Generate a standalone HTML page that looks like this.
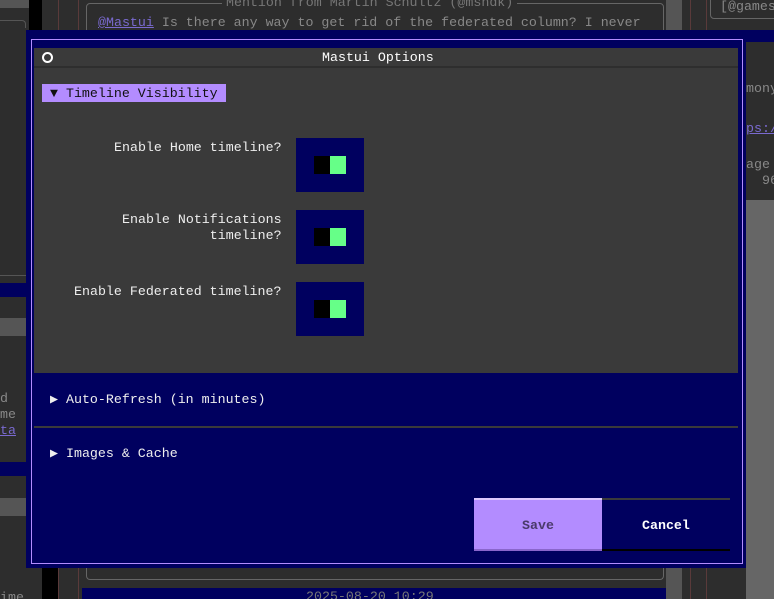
<!DOCTYPE html>
<html><head><meta charset="utf-8"><style>
*{margin:0;padding:0;box-sizing:border-box}
html,body{width:774px;height:599px;overflow:hidden}
body{background:#2d2d2d;font-family:"Liberation Mono","DejaVu Sans Mono",monospace;font-size:13.3px;position:relative}
.a{position:absolute}
.t{position:absolute;white-space:pre;line-height:16px}
</style></head><body>
<!-- background app -->
<div class="a" style="left:0;top:0;width:42px;height:8px;background:#555"></div>
<div class="a" style="left:29px;top:0;width:13px;height:30px;background:#000"></div>
<div class="a" style="left:-10px;top:20px;width:36px;height:8px;border-top:1px solid #555;border-right:1px solid #555;border-radius:0 4px 0 0"></div>
<div class="a" style="left:0;top:275px;width:26px;height:1px;background:#555"></div>
<div class="a" style="left:58px;top:0;width:1px;height:599px;background:#5a3a3a"></div>
<div class="a" style="left:78px;top:0;width:1px;height:599px;background:#5a3a3a"></div>
<div class="a" style="left:86px;top:3px;width:578px;height:60px;border:1px solid #666;border-radius:4px"></div>
<div class="t" style="left:222px;top:-5px;color:#777;background:#2d2d2d;padding:0 4px">Mention from Martin Schultz (@mshdk)</div>
<div class="t" style="left:98px;top:15px;color:#888"><span style="color:#7a6ad0;text-decoration:underline">@Mastui</span> Is there any way to get rid of the federated column? I never</div>
<div class="a" style="left:666px;top:0;width:16px;height:599px;background:#555"></div>
<div class="a" style="left:690px;top:0;width:1px;height:599px;background:#5a3a3a"></div>
<div class="a" style="left:706px;top:0;width:1px;height:599px;background:#5a3a3a"></div>
<div class="a" style="left:710px;top:-5px;width:80px;height:24px;border:1px solid #666;border-radius:4px"></div>
<div class="t" style="left:720px;top:-1px;color:#888">[@games</div>
<div class="a" style="left:746px;top:30px;width:28px;height:170px;background:#2d2d2d"></div>
<div class="a" style="left:746px;top:30px;width:28px;height:12px;background:#00005f"></div>
<div class="t" style="left:746px;top:81px;color:#888">mony</div>
<div class="t" style="left:746px;top:121px;color:#7a6ad0;text-decoration:underline">ps:/</div>
<div class="t" style="left:746px;top:157px;color:#888">age
  96%</div>
<div class="a" style="left:746px;top:200px;width:28px;height:399px;background:#666"></div>
<div class="a" style="left:0;top:283px;width:26px;height:14px;background:#00005f"></div>
<div class="a" style="left:0;top:318px;width:26px;height:18px;background:#555"></div>
<div class="t" style="left:0;top:391px;color:#888">d
me
<span style="color:#7a6ad0;text-decoration:underline">ta</span></div>
<div class="a" style="left:0;top:462px;width:26px;height:14px;background:#00005f"></div>
<div class="a" style="left:0;top:498px;width:26px;height:18px;background:#555"></div>
<div class="t" style="left:0;top:590px;color:#888">ime</div>
<div class="a" style="left:42px;top:568px;width:16px;height:31px;background:#000"></div>
<div class="a" style="left:86px;top:560px;width:578px;height:20px;border:1px solid #666;border-top:none;border-radius:0 0 4px 4px"></div>
<div class="a" style="left:82px;top:588px;width:584px;height:11px;background:#00005f"></div>
<div class="t" style="left:306px;top:589px;color:#777">2025-08-20 10:29</div>

<!-- dialog -->
<div class="a" style="left:26px;top:30px;width:720px;height:538px;background:#00005f"></div>
<div class="a" style="left:31px;top:39px;width:712px;height:525px;border:1px solid #b38cff"></div>
<div class="a" style="left:34px;top:48px;width:704px;height:325px;background:#3a3a3a"></div>
<div class="a" style="left:34px;top:66px;width:704px;height:2px;background:#2e2e2e"></div>
<div class="a" style="left:42px;top:52px;width:11px;height:11px;border:2px solid #fff;border-radius:50%"></div>
<div class="t" style="left:322px;top:50px;color:#fff">Mastui Options</div>
<div class="a" style="left:42px;top:84px;width:184px;height:18px;background:#b38cff"></div>
<div class="t" style="left:50px;top:86px;color:#111">▼ Timeline Visibility</div>

<div class="t" style="left:114px;top:140px;color:#eee">Enable Home timeline?</div>
<div class="t" style="left:122px;top:212px;color:#eee;text-align:right">Enable Notifications
timeline?</div>
<div class="t" style="left:74px;top:284px;color:#eee">Enable Federated timeline?</div>

<div class="a" style="left:296px;top:138px;width:68px;height:54px;background:#00005f"><div class="a" style="left:18px;top:18px;width:16px;height:18px;background:#000"></div><div class="a" style="left:34px;top:18px;width:16px;height:18px;background:#66ff88"></div></div>
<div class="a" style="left:296px;top:210px;width:68px;height:54px;background:#00005f"><div class="a" style="left:18px;top:18px;width:16px;height:18px;background:#000"></div><div class="a" style="left:34px;top:18px;width:16px;height:18px;background:#66ff88"></div></div>
<div class="a" style="left:296px;top:282px;width:68px;height:54px;background:#00005f"><div class="a" style="left:18px;top:18px;width:16px;height:18px;background:#000"></div><div class="a" style="left:34px;top:18px;width:16px;height:18px;background:#66ff88"></div></div>

<div class="t" style="left:50px;top:392px;color:#eee">▶ Auto-Refresh (in minutes)</div>
<div class="a" style="left:34px;top:426px;width:704px;height:2px;background:#3a3a3a"></div>
<div class="t" style="left:50px;top:446px;color:#eee">▶ Images &amp; Cache</div>

<div class="a" style="left:474px;top:498px;width:128px;height:53px;background:#b38cff;border-top:2px solid #dcc8ff;border-bottom:2px solid #8a66cc"></div>
<div class="t" style="left:522px;top:518px;color:#4a3a6a;font-weight:bold">Save</div>
<div class="a" style="left:602px;top:498px;width:128px;height:53px;border-top:2px solid #3a3a3a;border-bottom:2px solid #000"></div>
<div class="t" style="left:642px;top:518px;color:#fff;font-weight:bold">Cancel</div>
</body></html>
